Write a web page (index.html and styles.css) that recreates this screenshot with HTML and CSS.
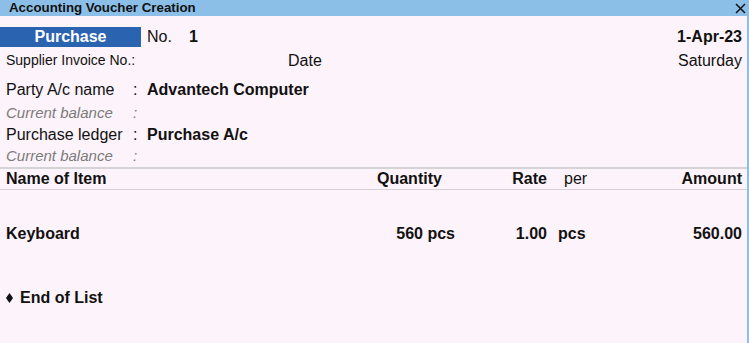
FILE: index.html
```html
<!DOCTYPE html>
<html lang="en">
<head>
  <meta charset="UTF-8" />
  <meta name="viewport" content="width=device-width, initial-scale=1.0" />
  <title>Accounting Voucher Creation</title>
  <link rel="stylesheet" href="styles.css">
</head>
<body>
  <header class="titlebar">
    <span>Accounting Voucher Creation</span>
    <svg class="close" width="11" height="11" viewBox="0 0 11 11">
      <path d="M1 1 L10 10 M10 1 L1 10" stroke="#111" stroke-width="1.5" fill="none"/>
    </svg>
  </header>

  <main class="voucher">
    <div class="top-row">
      <div class="vtype">Purchase</div>
      <span class="no">No.</span>
      <b class="num">1</b>
      <b class="date">1-Apr-23</b>
    </div>
    <div class="second-row">
      <span class="supplier">Supplier Invoice No.:</span>
      <span class="date-label">Date</span>
      <span class="day">Saturday</span>
    </div>

    <div class="ledgers">
      <div class="field party"><span>Party A/c name</span><span>:</span><b>Advantech Computer</b></div>
      <div class="field balance bal1"><span>Current balance</span><span>:</span><span></span></div>
      <div class="field ledger"><span>Purchase ledger</span><span>:</span><b>Purchase A/c</b></div>
      <div class="field balance bal2"><span>Current balance</span><span>:</span><span></span></div>
    </div>

    <div class="items-head">
      <div>Name of Item</div>
      <div>Quantity</div>
      <div class="right">Rate</div>
      <div class="per-head">per</div>
      <div class="right">Amount</div>
    </div>

    <div class="item-row">
      <div>Keyboard</div>
      <div class="right">560 pcs</div>
      <div class="right">1.00</div>
      <div class="per-val">pcs</div>
      <div class="right">560.00</div>
    </div>

    <div class="end-list">
      <svg class="diamond" width="7" height="10" viewBox="0 0 7 10"><path d="M3.5 0 L7 5 L3.5 10 L0 5 Z" fill="#111"/></svg>
      <span>End of List</span>
    </div>
  </main>
</body>
</html>
```

FILE: styles.css
```css
* { box-sizing: border-box; }
body {
  margin: 0;
  width: 749px;
  height: 343px;
  overflow: hidden;
  font-family: "Liberation Sans", Arial, sans-serif;
  color: #111;
  background-color: #fdf3fa;
}
.titlebar {
  height: 16px;
  background-color: #8cbfe7;
  display: flex;
  justify-content: space-between;
  align-items: center;
  padding: 0 3px 0 9px;
  font-size: 13.3px;
  font-weight: bold;
  line-height: 16px;
}
.close { margin-top: 1px; }
.voucher {
  height: 327px;
  border-right: 2px solid #8cbfe7;
  padding-top: 11px;
  font-size: 16px;
}
.top-row {
  display: flex;
  align-items: center;
  height: 20px;
  line-height: 20px;
  padding-right: 5px;
}
.vtype {
  width: 141px;
  height: 20px;
  background-color: #2a63b0;
  color: white;
  font-weight: bold;
  text-align: center;
}
.no { margin-left: 6px; }
.num { margin-left: 17px; }
.date { margin-left: auto; }
.second-row {
  display: flex;
  height: 27px;
  line-height: 27px;
  padding: 0 5px 0 6px;
}
.supplier { font-size: 14px; width: 282px; }
.date-label { flex: 1; }
.ledgers { margin-top: 3px; }
.field {
  display: grid;
  grid-template-columns: 127px 14px 1fr;
  padding-left: 6px;
}
.party { line-height: 25px; }
.bal1 { line-height: 22px; }
.ledger { line-height: 21px; }
.bal2 { line-height: 22px; }
.balance {
  font-size: 15px;
  font-style: italic;
  color: #7b7b7b;
}
.items-head, .item-row {
  display: grid;
  grid-template-columns: 371px 78px 92px 95px 1fr;
  padding: 0 5px 0 6px;
}
.items-head {
  border-top: 2px solid #d6d3d6;
  border-bottom: 1px solid #d6d3d6;
  line-height: 20px;
  font-weight: bold;
}
.per-head { font-weight: normal; padding-left: 17px; }
.item-row {
  margin-top: 34px;
  line-height: 20px;
  font-weight: bold;
}
.per-val { padding-left: 11px; }
.right { text-align: right; }
.end-list {
  display: flex;
  align-items: center;
  gap: 7px;
  margin-top: 44px;
  padding-left: 6px;
  line-height: 20px;
  font-weight: bold;
}
```
